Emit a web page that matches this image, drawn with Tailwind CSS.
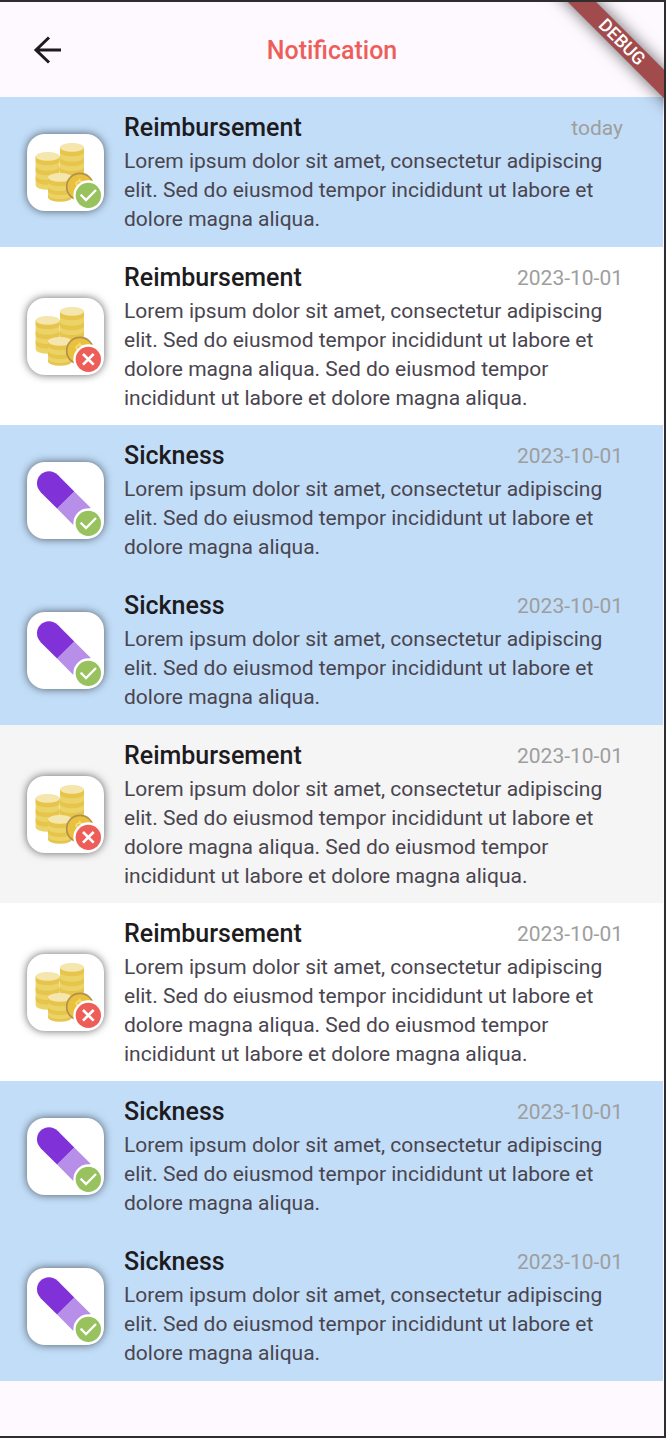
<!DOCTYPE html>
<html lang="en">
<head>
<meta charset="utf-8">
<meta name="viewport" content="width=device-width, initial-scale=1">
<title>Notification</title>
<script src="https://cdn.jsdelivr.net/npm/@tailwindcss/browser@4"></script>
</head>
<body class="font-['Roboto',sans-serif]">
<svg class="hidden" aria-hidden="true">
  <defs>
    <g id="stack">
      <path d="M0 0V87A36 13 0 0 0 72 87V0Z" fill="#ebd368"/>
      <path d="M0 0V14A36 13 0 0 0 72 14V0Z" fill="#e7c54b"/>
      <path d="M0 30A36 13 0 0 0 72 30V44A36 13 0 0 1 0 44Z" fill="#e7c54b"/>
      <path d="M0 58A36 13 0 0 0 72 58V72A36 13 0 0 1 0 72Z" fill="#e7c54b"/>
      <ellipse cx="36" cy="0" rx="36" ry="13" fill="#f5e6ae"/>
    </g>
    <symbol id="coins" viewBox="36 40 231 231">
      <use href="#stack" x="135" y="80"/>
      <use href="#stack" x="62" y="107"/>
      <path d="M99 170V230A36 13 0 0 0 171 230V170Z" fill="#e7c54b"/>
      <path d="M99 184A36 13 0 0 0 171 184V198A36 13 0 0 1 99 198Z" fill="#ebd368"/>
      <path d="M99 210A36 13 0 0 0 171 210V222A36 13 0 0 1 99 222Z" fill="#ebd368"/>
      <ellipse cx="135" cy="170" rx="36" ry="13" fill="#f5e6ae"/>
      <circle cx="195" cy="198" r="40" fill="#e9c13f" stroke="#b0904a" stroke-width="5"/>
      <path d="M204 184C194 178 182 182 184 191C185 198 204 194 204 204M194 174V184" fill="none" stroke="#f5dc75" stroke-width="5"/>
    </symbol>
    <symbol id="pill" viewBox="36 40 231 231">
      <path d="M152 154L201 203" stroke="#b78ee8" stroke-width="73"/>
      <circle cx="102" cy="104" r="36" fill="#8032d8"/>
      <path d="M102 104L152 154" stroke="#8032d8" stroke-width="73"/>
    </symbol>
    <symbol id="ok" viewBox="36 40 231 231">
      <circle cx="220" cy="224" r="45" fill="#fff"/>
      <circle cx="220" cy="224" r="38" fill="#97c25d"/>
      <path d="M197 222L213 238L243 208" fill="none" stroke="#fff" stroke-width="7"/>
    </symbol>
    <symbol id="no" viewBox="36 40 231 231">
      <circle cx="220" cy="224" r="45" fill="#fff"/>
      <circle cx="220" cy="224" r="38" fill="#ee5e59"/>
      <path d="M204 208L236 240M236 208L204 240" fill="none" stroke="#fff" stroke-width="8"/>
    </symbol>
  </defs>
</svg>
<div class="relative flex min-h-screen flex-col overflow-hidden border-y-2 border-r-2 border-[#2e2e2e] bg-[#fdf9ff]">
  <header class="grid h-[95px] grid-cols-[96px_1fr_96px] items-center">
    <button type="button" aria-label="Back" class="flex size-12 items-center justify-center justify-self-center">
      <svg viewBox="0 0 34 34" class="size-[34px]" fill="none" stroke="#1d1b20" stroke-width="3"><path d="M30 17H5M18 4.500L5 17L18 29.500"/></svg>
    </button>
    <h1 class="pt-0.5 text-center text-[25px] font-medium text-[#ee5e59]">Notification</h1>
  </header>
  <ul class="mr-px">
    <li class="flex min-h-[150px] items-center gap-5 bg-[#c2ddf8] pr-10 pl-[27px]">
      <div class="size-[77px] shrink-0 rounded-[18px] bg-white shadow-[0_0_8px_rgba(0,0,0,0.6)]"><svg class="size-full"><use href="#coins"/><use href="#ok"/></svg></div>
      <div class="min-w-0 flex-1 self-start pt-3.5 pb-3">
        <div class="mb-0.5 flex justify-between leading-[34px]"><h2 class="text-[25px]/[34px] font-medium text-[#1d1b20]">Reimbursement</h2><time class="text-[21px] text-[#9e9e9e]">today</time></div>
        <p class="text-[21px]/[29px] text-[#49454f]">Lorem ipsum dolor sit amet, consectetur adipiscing elit. Sed do eiusmod tempor incididunt ut labore et dolore magna aliqua.</p>
      </div>
    </li>
    <li class="flex min-h-[150px] items-center gap-5 bg-white pr-10 pl-[27px]">
      <div class="size-[77px] shrink-0 rounded-[18px] bg-white shadow-[0_0_8px_rgba(0,0,0,0.6)]"><svg class="size-full"><use href="#coins"/><use href="#no"/></svg></div>
      <div class="min-w-0 flex-1 self-start pt-3.5 pb-3">
        <div class="mb-0.5 flex justify-between leading-[34px]"><h2 class="text-[25px]/[34px] font-medium text-[#1d1b20]">Reimbursement</h2><time class="text-[21px] text-[#9e9e9e]">2023-10-01</time></div>
        <p class="text-[21px]/[29px] text-[#49454f]">Lorem ipsum dolor sit amet, consectetur adipiscing elit. Sed do eiusmod tempor incididunt ut labore et dolore magna aliqua. Sed do eiusmod tempor incididunt ut labore et dolore magna aliqua.</p>
      </div>
    </li>
    <li class="flex min-h-[150px] items-center gap-5 bg-[#c2ddf8] pr-10 pl-[27px]">
      <div class="size-[77px] shrink-0 rounded-[18px] bg-white shadow-[0_0_8px_rgba(0,0,0,0.6)]"><svg class="size-full"><use href="#pill"/><use href="#ok"/></svg></div>
      <div class="min-w-0 flex-1 self-start pt-3.5 pb-3">
        <div class="mb-0.5 flex justify-between leading-[34px]"><h2 class="text-[25px]/[34px] font-medium text-[#1d1b20]">Sickness</h2><time class="text-[21px] text-[#9e9e9e]">2023-10-01</time></div>
        <p class="text-[21px]/[29px] text-[#49454f]">Lorem ipsum dolor sit amet, consectetur adipiscing elit. Sed do eiusmod tempor incididunt ut labore et dolore magna aliqua.</p>
      </div>
    </li>
    <li class="flex min-h-[150px] items-center gap-5 bg-[#c2ddf8] pr-10 pl-[27px]">
      <div class="size-[77px] shrink-0 rounded-[18px] bg-white shadow-[0_0_8px_rgba(0,0,0,0.6)]"><svg class="size-full"><use href="#pill"/><use href="#ok"/></svg></div>
      <div class="min-w-0 flex-1 self-start pt-3.5 pb-3">
        <div class="mb-0.5 flex justify-between leading-[34px]"><h2 class="text-[25px]/[34px] font-medium text-[#1d1b20]">Sickness</h2><time class="text-[21px] text-[#9e9e9e]">2023-10-01</time></div>
        <p class="text-[21px]/[29px] text-[#49454f]">Lorem ipsum dolor sit amet, consectetur adipiscing elit. Sed do eiusmod tempor incididunt ut labore et dolore magna aliqua.</p>
      </div>
    </li>
    <li class="flex min-h-[150px] items-center gap-5 bg-[#f5f5f5] pr-10 pl-[27px]">
      <div class="size-[77px] shrink-0 rounded-[18px] bg-white shadow-[0_0_8px_rgba(0,0,0,0.6)]"><svg class="size-full"><use href="#coins"/><use href="#no"/></svg></div>
      <div class="min-w-0 flex-1 self-start pt-3.5 pb-3">
        <div class="mb-0.5 flex justify-between leading-[34px]"><h2 class="text-[25px]/[34px] font-medium text-[#1d1b20]">Reimbursement</h2><time class="text-[21px] text-[#9e9e9e]">2023-10-01</time></div>
        <p class="text-[21px]/[29px] text-[#49454f]">Lorem ipsum dolor sit amet, consectetur adipiscing elit. Sed do eiusmod tempor incididunt ut labore et dolore magna aliqua. Sed do eiusmod tempor incididunt ut labore et dolore magna aliqua.</p>
      </div>
    </li>
    <li class="flex min-h-[150px] items-center gap-5 bg-white pr-10 pl-[27px]">
      <div class="size-[77px] shrink-0 rounded-[18px] bg-white shadow-[0_0_8px_rgba(0,0,0,0.6)]"><svg class="size-full"><use href="#coins"/><use href="#no"/></svg></div>
      <div class="min-w-0 flex-1 self-start pt-3.5 pb-3">
        <div class="mb-0.5 flex justify-between leading-[34px]"><h2 class="text-[25px]/[34px] font-medium text-[#1d1b20]">Reimbursement</h2><time class="text-[21px] text-[#9e9e9e]">2023-10-01</time></div>
        <p class="text-[21px]/[29px] text-[#49454f]">Lorem ipsum dolor sit amet, consectetur adipiscing elit. Sed do eiusmod tempor incididunt ut labore et dolore magna aliqua. Sed do eiusmod tempor incididunt ut labore et dolore magna aliqua.</p>
      </div>
    </li>
    <li class="flex min-h-[150px] items-center gap-5 bg-[#c2ddf8] pr-10 pl-[27px]">
      <div class="size-[77px] shrink-0 rounded-[18px] bg-white shadow-[0_0_8px_rgba(0,0,0,0.6)]"><svg class="size-full"><use href="#pill"/><use href="#ok"/></svg></div>
      <div class="min-w-0 flex-1 self-start pt-3.5 pb-3">
        <div class="mb-0.5 flex justify-between leading-[34px]"><h2 class="text-[25px]/[34px] font-medium text-[#1d1b20]">Sickness</h2><time class="text-[21px] text-[#9e9e9e]">2023-10-01</time></div>
        <p class="text-[21px]/[29px] text-[#49454f]">Lorem ipsum dolor sit amet, consectetur adipiscing elit. Sed do eiusmod tempor incididunt ut labore et dolore magna aliqua.</p>
      </div>
    </li>
    <li class="flex min-h-[150px] items-center gap-5 bg-[#c2ddf8] pr-10 pl-[27px]">
      <div class="size-[77px] shrink-0 rounded-[18px] bg-white shadow-[0_0_8px_rgba(0,0,0,0.6)]"><svg class="size-full"><use href="#pill"/><use href="#ok"/></svg></div>
      <div class="min-w-0 flex-1 self-start pt-3.5 pb-3">
        <div class="mb-0.5 flex justify-between leading-[34px]"><h2 class="text-[25px]/[34px] font-medium text-[#1d1b20]">Sickness</h2><time class="text-[21px] text-[#9e9e9e]">2023-10-01</time></div>
        <p class="text-[21px]/[29px] text-[#49454f]">Lorem ipsum dolor sit amet, consectetur adipiscing elit. Sed do eiusmod tempor incididunt ut labore et dolore magna aliqua.</p>
      </div>
    </li>
  </ul>
  <div class="absolute top-[30px] -right-[58px] flex h-5 w-[200px] rotate-45 items-center justify-center bg-[#a24b4c] text-lg font-medium text-white shadow-[0_0_16px_rgba(0,0,0,0.6)]">DEBUG</div>
</div>
</body>
</html>
